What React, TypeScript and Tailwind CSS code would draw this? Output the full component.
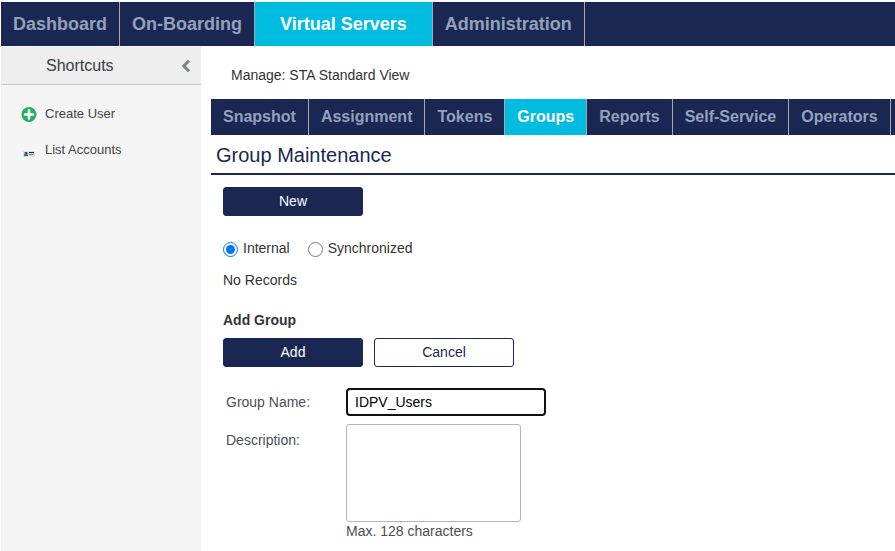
import { useState } from 'react';

const mainTabs = ['Dashboard', 'On-Boarding', 'Virtual Servers', 'Administration'];
const subTabs = ['Snapshot', 'Assignment', 'Tokens', 'Groups', 'Reports', 'Self-Service', 'Operators'];

function MainNav() {
  return (
    <nav className="mt-0.5 flex h-11 bg-[#1a2753]">
      {mainTabs.map((tab) => (
        <button
          key={tab}
          type="button"
          className={
            tab === 'Virtual Servers'
              ? 'border-r border-[#a9a9a9] bg-[#00bce1] px-[25px] pt-0.5 text-[18px] font-bold text-white'
              : 'border-r border-[#a9a9a9] px-3 pt-0.5 text-[18px] font-bold text-[#94a1bb]'
          }
        >
          {tab}
        </button>
      ))}
    </nav>
  );
}

function Sidebar() {
  return (
    <aside className="w-50 shrink-0 bg-[#f4f4f4]">
      <div className="flex h-[38px] items-center border-b border-[#c8c8c8] bg-[#eeeeee] pr-2.5 pl-[45px]">
        <h2 className="flex-1 text-base text-[#333f48]">Shortcuts</h2>
        <button type="button" aria-label="Collapse shortcuts">
          <svg width="10" height="14" viewBox="0 0 10 14" fill="none" stroke="#7d8584" strokeWidth="3">
            <path d="M8 1.800 2.800 7 8 12.200" />
          </svg>
        </button>
      </div>
      <ul className="mt-[11px] pl-5 text-[13px] text-[#444444]">
        <li>
          <a href="#create" className="flex h-9 items-center gap-2">
            <svg width="16" height="16" viewBox="0 0 16 16">
              <circle cx="8" cy="8.500" r="7.500" fill="#27ae60" />
              <path d="M8 4.500v8M4 8.500h8" stroke="#fff" strokeWidth="2.6" strokeLinecap="round" />
            </svg>
            Create User
          </a>
        </li>
        <li>
          <a href="#accounts" className="flex h-9 items-center gap-2">
            <svg width="16" height="16" viewBox="0 0 16 16">
              <rect x="2" y="9" width="12" height="6" fill="#dce3e8" />
              <rect x="3" y="10" width="4" height="4" fill="#8fb4d6" />
              <circle cx="5" cy="11" r="1.1" fill="#1c2f45" />
              <path d="M3 14c0-2.400 4-2.400 4 0z" fill="#1f4e79" />
              <path d="M8 10.500h5" stroke="#222" />
              <path d="M8 12.500h4.500" stroke="#777" />
            </svg>
            List Accounts
          </a>
        </li>
      </ul>
    </aside>
  );
}

function SubNav() {
  return (
    <nav className="flex h-9 overflow-hidden bg-[#1a2753]">
      {subTabs.map((tab) => (
        <button
          key={tab}
          type="button"
          className={
            tab === 'Groups'
              ? 'shrink-0 border-r border-[#a9a9a9] bg-[#00bce1] px-3 text-base font-bold text-white'
              : 'shrink-0 border-r border-[#a9a9a9] px-3 text-base font-bold text-[#94a1bb]'
          }
        >
          {tab}
        </button>
      ))}
    </nav>
  );
}

const primary = 'h-[29px] w-35 rounded-[3px] border border-[#1a2753] bg-[#1a2753] pb-0.5 text-white';
const secondary = 'h-[29px] w-35 rounded-[3px] border border-[#1a2753] bg-white pb-0.5 text-[#1a2753]';

function GroupPanel() {
  const [source, setSource] = useState('internal');
  const [name, setName] = useState('IDPV_Users');
  return (
    <div className="pl-3">
      <button type="button" className={`mt-3 ${primary}`}>New</button>
      <div className="mt-[22px] flex h-5 items-center gap-[18px]">
        <label className="flex items-center gap-[5px]">
          <input
            type="radio"
            name="source"
            className="mt-0.5 size-[15px] accent-[#0075ff]"
            checked={source === 'internal'}
            onChange={() => setSource('internal')}
          />
          Internal
        </label>
        <label className="flex items-center gap-[5px]">
          <input
            type="radio"
            name="source"
            className="mt-0.5 size-[15px] accent-[#0075ff]"
            checked={source === 'synchronized'}
            onChange={() => setSource('synchronized')}
          />
          Synchronized
        </label>
      </div>
      <p className="mt-3">No Records</p>
      <h2 className="mt-5 font-bold">Add Group</h2>
      <div className="mt-2 flex gap-[11px]">
        <button type="button" className={primary}>Add</button>
        <button type="button" className={secondary}>Cancel</button>
      </div>
      <form className="mt-[21px] grid grid-cols-[120px_1fr] gap-y-2 pl-[3px] text-[#4a4f54]">
        <label htmlFor="group-name" className="pt-1">Group Name:</label>
        <input
          id="group-name"
          type="text"
          value={name}
          onChange={(e) => setName(e.target.value)}
          className="h-7 w-50 rounded-[4px] border-2 border-[#101010] px-[7px] text-black outline-none"
        />
        <label htmlFor="description" className="pt-1.5">Description:</label>
        <div>
          <textarea
            id="description"
            maxLength={128}
            className="block h-[98px] w-[175px] resize-none rounded-[3px] border border-[#b5b5b5]"
          />
          <p className="leading-[18px]">Max. 128 characters</p>
        </div>
      </form>
    </div>
  );
}

export default function App() {
  return (
    <div className="flex min-h-screen flex-col bg-white pl-px font-['Liberation_Sans',Arial,sans-serif] text-sm text-[#333333]">
      <MainNav />
      <div className="mt-px flex flex-1">
        <Sidebar />
        <main className="min-w-0 flex-1 pl-2.5">
          <p className="mt-[18px] mb-3.5 pl-5">Manage: STA Standard View</p>
          <SubNav />
          <h1 className="flex h-10 items-center border-b-2 border-[#1a2753] pt-0.5 pl-[5px] text-[20px] text-[#1a2753]">
            Group Maintenance
          </h1>
          <GroupPanel />
        </main>
      </div>
    </div>
  );
}
